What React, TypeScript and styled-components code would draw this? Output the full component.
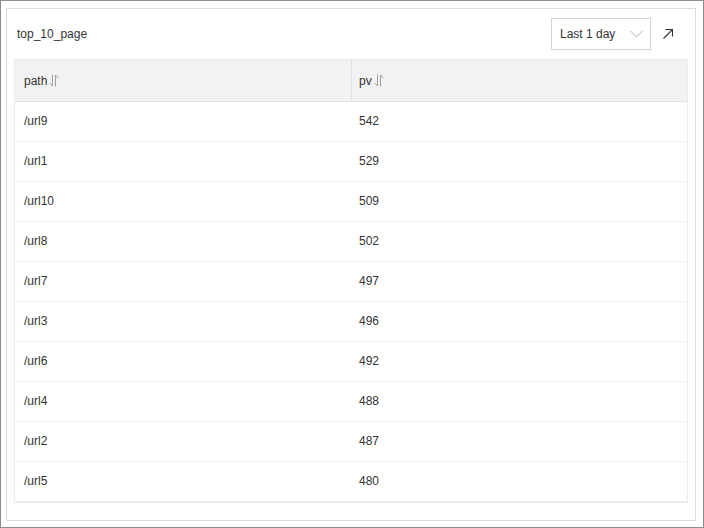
import React from "react";
import styled, { createGlobalStyle } from "styled-components";

const Global = createGlobalStyle`
  html, body { margin: 0; padding: 0; background: #fff; }
  body { font-family: "Liberation Sans", Arial, Helvetica, sans-serif; }
  * { box-sizing: border-box; }
`;

const Frame = styled.div`
  width: 704px;
  height: 528px;
  border: 1px solid #8c8c8c;
  padding: 7px 7px 6px 5px;
  background: #fff;
`;

const Card = styled.div`
  width: 690px;
  height: 513px;
  border: 1px solid #dcdcdc;
  padding: 9px 7px 17px 7px;
  display: flex;
  flex-direction: column;
  gap: 9px;
`;

const TopBar = styled.div`
  height: 32px;
  display: flex;
  align-items: center;
  padding-left: 3px;
`;

const Title = styled.div`
  flex: 1;
  font-size: 12px;
  color: #333;
`;

const Select = styled.div`
  width: 100px;
  height: 32px;
  border: 1px solid #d4d4d4;
  display: flex;
  align-items: center;
  justify-content: space-between;
  padding: 0 7px 0 8px;
  font-size: 12px;
  color: #333;
  background: #fff;
`;

const Expand = styled.div`
  width: 12px;
  height: 12px;
  margin-left: 11px;
  margin-right: 14px;
  display: flex;
  align-items: center;
  justify-content: center;
  color: #333;
`;

const Table = styled.div`
  width: 674px;
  border: 1px solid #ebebeb;
  box-shadow: 0 0 1px rgba(0, 0, 0, 0.04);
`;

const Row = styled.div<{ $head?: boolean }>`
  display: grid;
  grid-template-columns: 336px 1fr;
  height: ${(p) => (p.$head ? 42 : 40)}px;
  padding-bottom: ${(p) => (p.$head ? 0 : 2)}px;
  background: ${(p) => (p.$head ? "#f2f2f2" : "#fff")};
  border-bottom: 1px solid ${(p) => (p.$head ? "#e3e3e3" : "#efefef")};
`;

const Cell = styled.div<{ $second?: boolean; $head?: boolean }>`
  display: flex;
  align-items: center;
  gap: 2px;
  padding-left: ${(p) => (p.$second ? 7 : 9)}px;
  font-size: 12px;
  color: #333;
  border-left: ${(p) => (p.$second ? `1px solid ${p.$head ? "#dedede" : "transparent"}` : "none")};
`;

const SortIcon = () => (
  <svg width="10" height="13" viewBox="0 0 10 13" fill="none" stroke="#a0a0a0" strokeWidth="1">
    <path d="M3.5 0.5v11.5L0.8 9" />
    <path d="M6.5 12.5V1l2.7 3" />
  </svg>
);

const Chevron = () => (
  <svg width="13" height="8" viewBox="0 0 13 8" fill="none" stroke="#b0b0b0" strokeWidth="1">
    <path d="M0.5 1l6 6 6-6" />
  </svg>
);

const ExpandIcon = () => (
  <svg width="12" height="12" viewBox="0 0 12 12" fill="none" stroke="#333" strokeWidth="1.1">
    <path d="M1.5 10.5L10.5 1.5" />
    <path d="M3.5 1.5h7v7" />
  </svg>
);

const data: [string, number][] = [
  ["/url9", 542],
  ["/url1", 529],
  ["/url10", 509],
  ["/url8", 502],
  ["/url7", 497],
  ["/url3", 496],
  ["/url6", 492],
  ["/url4", 488],
  ["/url2", 487],
  ["/url5", 480],
];

export default function App() {
  return (
    <>
      <Global />
      <Frame>
        <Card>
          <TopBar>
            <Title>top_10_page</Title>
            <Select>
              <span>Last 1 day</span>
              <Chevron />
            </Select>
            <Expand>
              <ExpandIcon />
            </Expand>
          </TopBar>
          <Table>
            <Row $head>
              <Cell $head>
                path
                <SortIcon />
              </Cell>
              <Cell $head $second>
                pv
                <SortIcon />
              </Cell>
            </Row>
            {data.map(([p, v]) => (
              <Row key={p}>
                <Cell>{p}</Cell>
                <Cell $second>{v}</Cell>
              </Row>
            ))}
          </Table>
        </Card>
      </Frame>
    </>
  );
}
